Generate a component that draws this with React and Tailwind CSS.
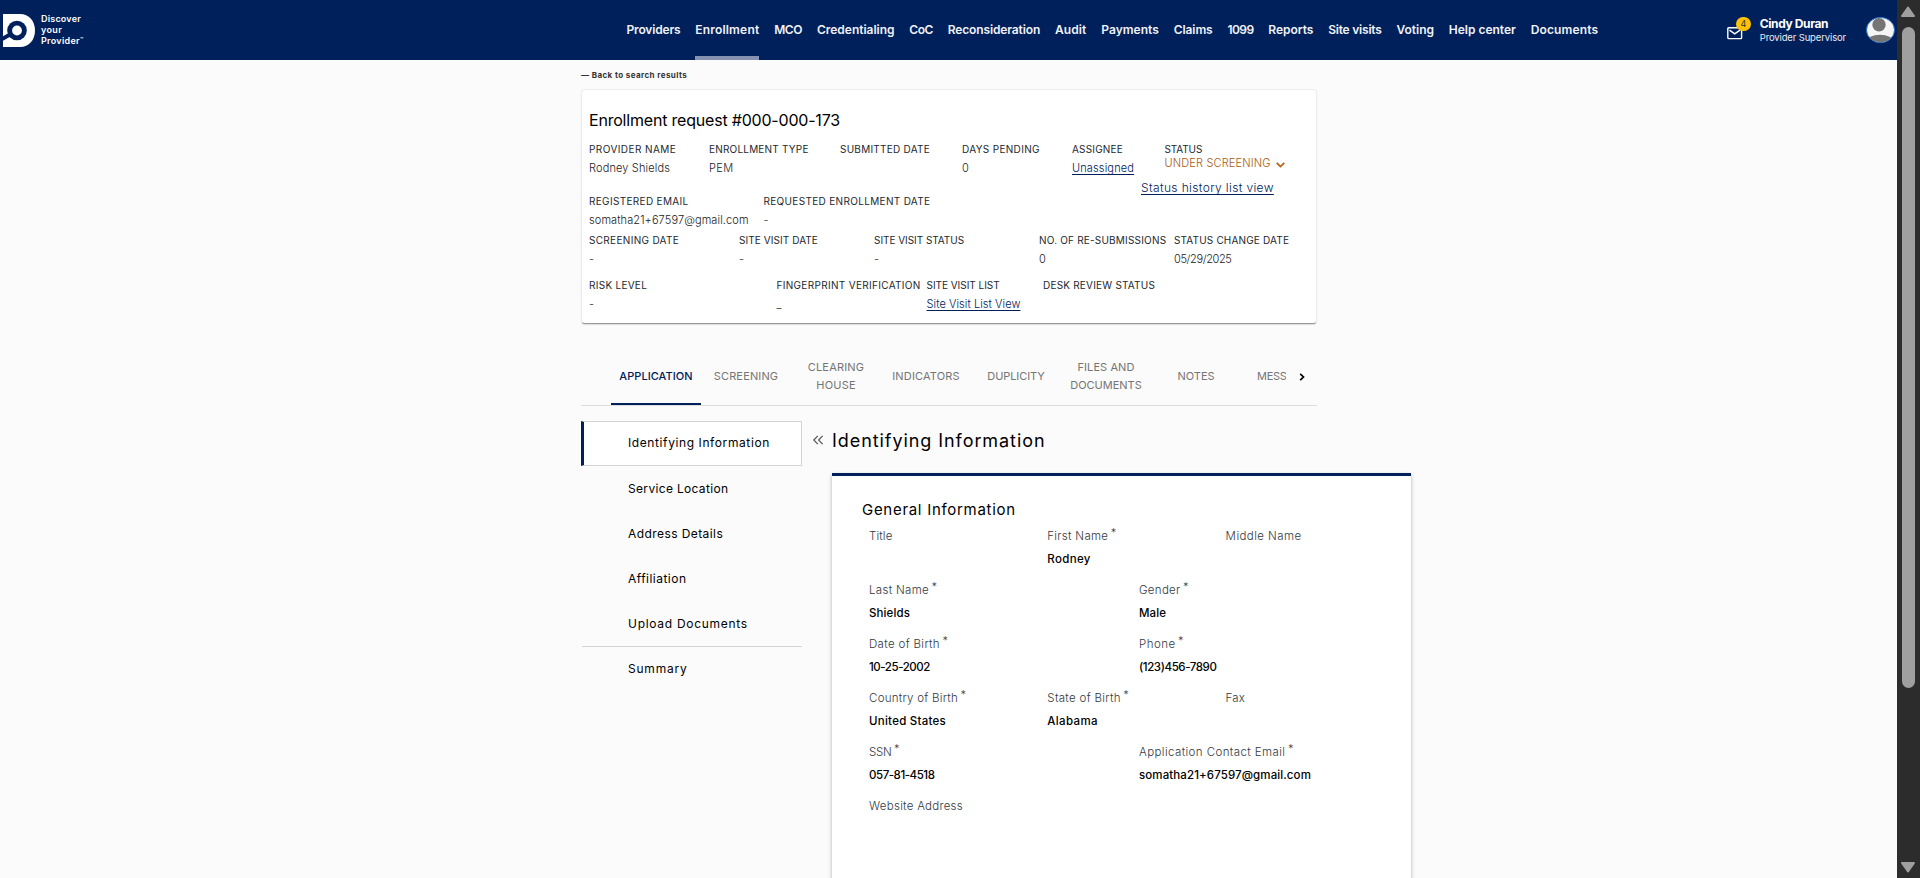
const NAV = [
  ["Providers", "tracking-[-0.16px]"],
  ["Enrollment", "tracking-[0.18px]"],
  ["MCO", "tracking-[-0.38px]"],
  ["Credentialing", "tracking-[-0.02px]"],
  ["CoC", "tracking-[-0.5px]"],
  ["Reconsideration", "tracking-[-0.12px]"],
  ["Audit", "tracking-[0.11px]"],
  ["Payments", "tracking-[0.02px]"],
  ["Claims", "tracking-[-0.07px]"],
  ["1099", "tracking-[-0.59px]"],
  ["Reports", "tracking-[-0.04px]"],
  ["Site visits", "tracking-[-0.21px]"],
  ["Voting", "tracking-[-0.01px]"],
  ["Help center", "tracking-[-0.01px]"],
  ["Documents", "tracking-[0.14px]"],
];

function Logo() {
  return (
    <svg className="block h-[33px] w-8" viewBox="0 0 32 33">
      <path d="M0 0H17C26 0 32 7 32 16.5S26 33 17 33H0Z" fill="#fff" />
      <path d="M8 20 -1 25" stroke="#00205b" strokeWidth="4" fill="none" />
      <circle cx="14" cy="16.5" r="9.8" fill="#00205b" />
      <circle cx="14" cy="16.5" r="4.9" fill="#fff" />
    </svg>
  );
}

function Avatar() {
  return (
    <svg className="block h-[26px] w-[29px]" viewBox="0 0 29 26">
      <defs>
        <clipPath id="face">
          <ellipse cx="14.5" cy="13" rx="13.5" ry="12.2" />
        </clipPath>
      </defs>
      <ellipse cx="14.5" cy="13" rx="14" ry="12.6" fill="#f5f5f5" stroke="#1f6fd0" strokeWidth="0.9" />
      <g clipPath="url(#face)" fill="#757575">
        <circle cx="13" cy="7.8" r="6.7" />
        <ellipse cx="14" cy="24.5" rx="13.5" ry="6.8" />
      </g>
    </svg>
  );
}

function Header() {
  return (
    <header className="flex h-15 shrink-0 items-center bg-[#00205b] pl-[3px] text-white">
      <div className="flex w-[623.5px] shrink-0 items-center">
        <Logo />
        <div className="ml-[6px] pb-[1px] text-[9px] leading-[11px] font-semibold">
          <div className="tracking-[0.2px]">Discover</div>
          <div className="tracking-[0.35px]">your</div>
          <div className="flex tracking-[0.28px]">
            Provider<span className="text-[5px] leading-[8px]">™</span>
          </div>
        </div>
      </div>
      <nav className="flex h-15 gap-[14.84px] text-[12px] font-semibold whitespace-nowrap text-[#f0f2f6]">
        {NAV.map(([label, tracking]) => (
          <a
            key={label}
            className={`flex h-15 items-center pb-[1px] ${tracking} ${
              label === "Enrollment" ? "shadow-[inset_0_-4px_0_#8591b1]" : ""
            }`}
          >
            {label}
          </a>
        ))}
      </nav>
      <div className="relative ml-[128.5px] h-[13px] w-4">
        <div className="pt-[3px]">
          <svg className="block h-[13px] w-4" viewBox="0 0 16 13" fill="none" stroke="#fff" strokeWidth="1.4">
            <rect x="0.8" y="0.8" width="13.8" height="10.8" rx="0.8" />
            <path d="M2.5 3.2 7.7 6.8 13 3.2" />
          </svg>
        </div>
        <span className="absolute -top-[7px] left-[9.5px] flex size-[14.5px] items-center justify-center rounded-full bg-[#ffc107] text-[9px] font-normal text-[#333]">
          4
        </span>
      </div>
      <div className="ml-[17px] pt-[1px] whitespace-nowrap">
        <div className="text-[12px] leading-[15px] font-bold tracking-[-0.38px]">Cindy Duran</div>
        <div className="text-[9.5px] leading-[14px] tracking-[-0.14px] text-[#e8ebf2]">Provider Supervisor</div>
      </div>
      <div className="ml-5">
        <Avatar />
      </div>
    </header>
  );
}

function Info({ label, lt, value, vt = "", width, link, children }) {
  return (
    <div className={`${width} shrink-0`}>
      <div className={`text-[10px] leading-[14px] font-normal text-[#23272e] ${lt}`}>{label}</div>
      {children}
      {value && (
        <div
          className={`mt-[5px] text-[11px] leading-[14px] font-light ${vt} ${
            link ? "text-[#00205b] underline underline-offset-2" : "text-[#222]"
          }`}
        >
          {value}
        </div>
      )}
    </div>
  );
}

function RequestCard() {
  return (
    <section className="mt-2 h-[235px] w-[736px] rounded-[4px] border border-[#ebebeb] border-b-[#999] bg-white pt-[18px] pl-[7px] whitespace-nowrap shadow-[0_1px_1px_rgba(0,0,0,0.12)]">
      <h1 className="text-[16px] leading-6 tracking-[-0.2px] text-black">Enrollment request #000-000-173</h1>
      <div className="mt-[10px] flex h-[33px]">
        <Info width="w-[120px]" label="PROVIDER NAME" lt="tracking-[0.43px]" value="Rodney Shields" vt="tracking-[0.14px]" />
        <Info width="w-[131px]" label="ENROLLMENT TYPE" lt="tracking-[0.2px]" value="PEM" vt="tracking-[0.38px]" />
        <Info width="w-[122px]" label="SUBMITTED DATE" lt="tracking-[0.25px]" />
        <Info width="w-[110px]" label="DAYS PENDING" lt="tracking-[0.33px]" value="0" />
        <Info width="w-[92.5px]" label="ASSIGNEE" lt="tracking-[0.19px]" value="Unassigned" vt="tracking-[0.14px]" link />
        <Info width="w-[130px]" label="STATUS" lt="tracking-[-0.11px]">
          <div className="flex items-center text-[11px] leading-[14px] font-light tracking-[0.15px] text-[#a85a10]">
            UNDER SCREENING
            <svg className="mt-[3px] ml-[5px] block h-[6px] w-[9px]" viewBox="0 0 9 6" fill="none" stroke="#b5651d" strokeWidth="1.8">
              <path d="M0.7 0.8 4.5 4.6 8.3 0.8" />
            </svg>
          </div>
        </Info>
      </div>
      <div className="mt-[7px] pl-[552px] text-[12px] leading-3 font-light tracking-[0.37px] text-[#00205b] underline underline-offset-2">
        Status history list view
      </div>
      <div className="flex h-[39px]">
        <Info width="w-[174.5px]" label="REGISTERED EMAIL" lt="tracking-[0.33px]" value="somatha21+67597@gmail.com" vt="tracking-[0.1px]" />
        <Info width="w-[170px]" label="REQUESTED ENROLLMENT DATE" lt="tracking-[0.33px]" value="-" />
      </div>
      <div className="flex h-[45px]">
        <Info width="w-[150px]" label="SCREENING DATE" lt="tracking-[0.32px]" value="-" />
        <Info width="w-[135px]" label="SITE VISIT DATE" lt="tracking-[0.08px]" value="-" />
        <Info width="w-[165px]" label="SITE VISIT STATUS" lt="tracking-[-0.04px]" value="-" />
        <Info width="w-[135px]" label="NO. OF RE-SUBMISSIONS" lt="tracking-[0.2px]" value="0" />
        <Info width="w-[120px]" label="STATUS CHANGE DATE" lt="tracking-[0.17px]" value="05/29/2025" vt="tracking-[-0.37px]" />
      </div>
      <div className="flex">
        <Info width="w-[187.5px]" label="RISK LEVEL" lt="tracking-[0.28px]" value="-" />
        <Info width="w-[150px]" label="FINGERPRINT VERIFICATION" lt="tracking-[0.32px]" value="_" />
        <Info width="w-[116.5px]" label="SITE VISIT LIST" lt="tracking-[-0.03px]" value="Site Visit List View" vt="tracking-[0.06px]" link />
        <Info width="w-[120px]" label="DESK REVIEW STATUS" lt="tracking-[0.21px]" />
      </div>
    </section>
  );
}

const TABS = [
  [["APPLICATION", "tracking-[0.05px]"]],
  [["SCREENING", "tracking-[0.15px]"]],
  [["CLEARING", "tracking-[0.19px]"], ["HOUSE", "tracking-[0.21px]"]],
  [["INDICATORS", "tracking-[0.16px]"]],
  [["DUPLICITY", "tracking-[-0.07px]"]],
  [["FILES AND", "tracking-[0.08px]"], ["DOCUMENTS", "tracking-[-0.01px]"]],
  [["NOTES", "tracking-[-0.03px]"]],
];

function Tabs() {
  return (
    <div className="mt-[23px] flex h-[59px] w-[736px] border-b border-[#dedede] pl-[30px] text-[11px] leading-[18px] text-[#757575]">
      {TABS.map((lines, i) => (
        <div
          key={i}
          className={`flex w-[90px] flex-col items-center justify-center ${
            i === 0 ? "font-medium text-[#00205b] shadow-[inset_0_-2px_0_#00205b]" : ""
          }`}
        >
          {lines.map(([text, tracking]) => (
            <span key={text} className={tracking}>{text}</span>
          ))}
        </div>
      ))}
      <div className="flex w-[45px] items-center overflow-hidden pl-4 tracking-[-0.29px]">MESS</div>
      <div className="flex w-[30px] items-center justify-center pt-[2px] pl-[1px]">
        <svg className="block h-2 w-[6px]" viewBox="0 0 6 8" fill="none" stroke="#000" strokeWidth="1.7">
          <path d="M1.2 0.8 4.5 4 1.2 7.2" />
        </svg>
      </div>
    </div>
  );
}

const STEPS = [
  ["Service Location", "tracking-[0.33px]"],
  ["Address Details", "tracking-[0.42px]"],
  ["Affiliation", "tracking-[0.47px]"],
  ["Upload Documents", "tracking-[0.71px]"],
];

function Sidebar() {
  return (
    <aside className="w-[221px] text-[12px] font-normal text-black">
      <div className="flex h-[45px] items-center border border-l-[3px] border-[#d4d4d4] border-l-[#00205b] bg-white pb-[2px] pl-11 tracking-[0.6px]">
        Identifying Information
      </div>
      {STEPS.map(([text, tracking]) => (
        <div key={text} className={`flex h-[45px] items-center pl-[47px] ${tracking}`}>{text}</div>
      ))}
      <div className="ml-[1px] flex h-[45px] items-center border-t border-[#d4d4d4] pl-[46px] tracking-[0.79px]">Summary</div>
    </aside>
  );
}

const ROWS = [
  [["Title", "tracking-[0.14px]", false], ["First Name", "tracking-[0.31px]", true, "Rodney", "tracking-[0.35px]"], ["Middle Name", "tracking-[0.43px]", false]],
  [["Last Name", "tracking-[0.31px]", true, "Shields", "tracking-[0.11px]"], ["Gender", "tracking-[0.3px]", true, "Male", "tracking-[0.08px]"]],
  [["Date of Birth", "tracking-[0.34px]", true, "10-25-2002", "tracking-[-0.44px]"], ["Phone", "tracking-[0.45px]", true, "(123)456-7890", "tracking-[-0.41px]"]],
  [["Country of Birth", "tracking-[0.26px]", true, "United States", "tracking-[0.25px]"], ["State of Birth", "tracking-[0.32px]", true, "Alabama", "tracking-[0.35px]"], ["Fax", "tracking-[0.19px]", false]],
  [["SSN", "tracking-[-0.26px]", true, "057-81-4518", "tracking-[-0.45px]"], ["Application Contact Email", "tracking-[0.41px]", true, "somatha21+67597@gmail.com", "tracking-[0.1px]"]],
  [["Website Address", "tracking-[0.27px]", false]],
];

function GeneralInformation() {
  return (
    <section className="mt-[18px] h-[420px] w-[579px] border-t-[3px] border-[#00205b] bg-white pt-[24px] pl-[30px] shadow-[0_2px_4px_rgba(0,0,0,0.3)]">
      <h3 className="text-[15px] leading-5 font-normal tracking-[0.71px] text-black">General Information</h3>
      <div className="mt-[9px] pl-[7px] text-[11.5px] leading-[14px] whitespace-nowrap">
        {ROWS.map((row, i) => (
          <div key={i} className="flex h-[54px]">
            {row.map(([label, lt, required, value, vt]) => (
              <div key={label} className={row.length === 3 ? "w-[178.3px]" : "w-[270px]"}>
                <div className="flex font-light text-[#333941]">
                  <span className={lt}>{label}</span>
                  {required && <span className="-mt-[3px] ml-[2.5px] text-[11px] font-light">*</span>}
                </div>
                {value && <div className={`mt-[9px] font-medium text-black ${vt}`}>{value}</div>}
              </div>
            ))}
          </div>
        ))}
      </div>
    </section>
  );
}

function Scrollbar() {
  return (
    <div className="flex w-[23px] shrink-0 flex-col items-center bg-[#2c2c2c] pt-[6px] pr-[1px] pb-[5px]">
      <svg className="block h-3 w-4" viewBox="0 0 16 12" fill="#9f9f9f" stroke="#9f9f9f" strokeWidth="2" strokeLinejoin="round">
        <path d="M8 1.5 14 10H2Z" />
      </svg>
      <div className="mt-[9px] h-[661px] w-[13px] rounded-full bg-[#9f9f9f]" />
      <svg className="mt-auto block h-3 w-4" viewBox="0 0 16 12" fill="#9f9f9f" stroke="#9f9f9f" strokeWidth="2" strokeLinejoin="round">
        <path d="M8 10.5 14 2H2Z" />
      </svg>
    </div>
  );
}

export default function App() {
  return (
    <div className="flex h-[878px] w-[1920px] overflow-hidden bg-[#fbfbfb] font-[Inter,Roboto,sans-serif]">
      <div className="flex w-[1897px] flex-col">
        <Header />
        <main className="pt-[9px] pl-[581px]">
          <a className="block text-[8px] leading-3 font-bold tracking-[0.41px] text-[#333]">— Back to search results</a>
          <RequestCard />
          <Tabs />
          <div className="mt-[15px] flex">
            <Sidebar />
            <div className="flex w-[30px] items-start pt-[14px] pl-[10px]">
              <svg className="block h-[10px] w-[12px]" viewBox="0 0 12 10" fill="none" stroke="#555" strokeWidth="1.2">
                <path d="M5.8 0.8 1.8 5 5.8 9.2M10.6 0.8 6.6 5 10.6 9.2" />
              </svg>
            </div>
            <div className="pt-[6px]">
              <h2 className="text-[18px] leading-7 font-normal tracking-[0.93px] text-black">Identifying Information</h2>
              <GeneralInformation />
            </div>
          </div>
        </main>
      </div>
      <Scrollbar />
    </div>
  );
}
